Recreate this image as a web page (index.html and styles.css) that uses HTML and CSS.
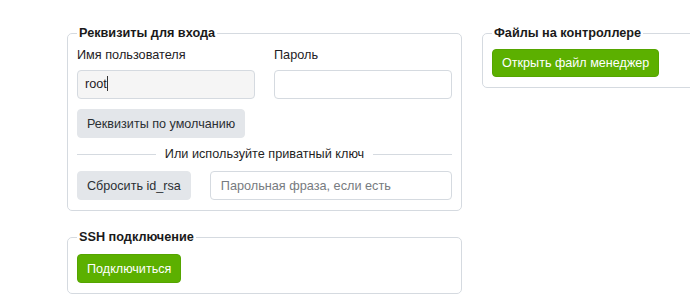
FILE: index.html
```html
<!DOCTYPE html>
<html lang="ru">

<head>
    <meta charset="UTF-8">
    <meta name="viewport" content="width=device-width, initial-scale=1.0">
    <title>SSH</title>
    <link rel="stylesheet" href="styles.css">
</head>

<body>

    <div class="page">
        <div class="left">
            <fieldset class="box">
                <legend>Реквизиты для входа</legend>
                <div class="pair">
                    <div class="field">
                        <label>Имя пользователя</label>
                        <div class="input user">root<span class="caret"></span></div>
                    </div>
                    <div class="field">
                        <label>Пароль</label>
                        <input class="input" type="password">
                    </div>
                </div>
                <button class="btn grey defaults">Реквизиты по умолчанию</button>
                <div class="divider">Или используйте приватный ключ</div>
                <div class="keyrow">
                    <button class="btn grey">Сбросить id_rsa</button>
                    <input class="input phrase" type="text" placeholder="Парольная фраза, если есть">
                </div>
            </fieldset>

            <fieldset class="box ssh">
                <legend>SSH подключение</legend>
                <button class="btn green">Подключиться</button>
            </fieldset>
        </div>

        <div class="right">
            <fieldset class="box">
                <legend>Файлы на контроллере</legend>
                <button class="btn green files">Открыть файл менеджер</button>
            </fieldset>
        </div>
    </div>

</body>

</html>
```

FILE: styles.css
```css
body {
    margin: 0;
    padding: 0;
    background-color: #ffffff;
    color: #1e2124;
    font-family: 'Liberation Sans', Arial, sans-serif;
    font-size: 12.7px;
    overflow: hidden;
}

.page {
    display: grid;
    grid-template-columns: 395px 250px;
    gap: 20px;
    padding: 24px 0 0 67px;
    align-items: start;
}

.box {
    margin: 0;
    border: 1px solid #d5dae0;
    border-radius: 5px;
    padding: 0 9px 10px;
}

.box legend {
    font-weight: bold;
    font-size: 12.7px;
    line-height: 18px;
    padding: 0 2px;
    color: #1a1a1a;
}

.pair {
    display: grid;
    grid-template-columns: 1fr 1fr;
    gap: 19px;
    margin-top: 3px;
}

.field label {
    display: block;
    line-height: 20px;
    margin-bottom: 5px;
}

.input {
    box-sizing: border-box;
    display: block;
    width: 100%;
    height: 29px;
    border: 1px solid #d5dae0;
    border-radius: 4px;
    padding: 0 10px;
    font-family: inherit;
    font-size: 12.7px;
    color: #1e2124;
    background-color: #ffffff;
    outline: none;
}

.input::placeholder {
    color: #777b80;
}

.user {
    background-color: #f5f5f5;
    line-height: 27px;
    padding-left: 7px;
}

.caret {
    display: inline-block;
    width: 1px;
    height: 15px;
    background-color: #333;
    vertical-align: -3px;
}

.btn {
    box-sizing: border-box;
    height: 29px;
    border: 1px solid transparent;
    border-radius: 4px;
    padding: 0 9px;
    font-family: inherit;
    font-size: 12.6px;
    cursor: pointer;
}

.grey {
    background-color: #e3e6ea;
    border-color: #e3e6ea;
    color: #2b2f33;
}

.green {
    background-color: #5cb000;
    border-color: #55a500;
    color: #ffffff;
}

.defaults {
    display: block;
    margin-top: 10px;
}

.divider {
    display: flex;
    align-items: center;
    gap: 9px;
    line-height: 17px;
    margin: 8px 0;
    color: #1f1f1f;
}

.divider::before,
.divider::after {
    content: '';
    flex: 1;
    border-top: 1px solid #d5dae0;
}

.keyrow {
    display: flex;
    gap: 19px;
}

.phrase {
    flex: 1;
}

.ssh {
    margin-top: 17px;
}

.ssh .btn {
    margin-top: 8px;
}

.files {
    margin-top: 7px;
    height: 28px;
}
```
